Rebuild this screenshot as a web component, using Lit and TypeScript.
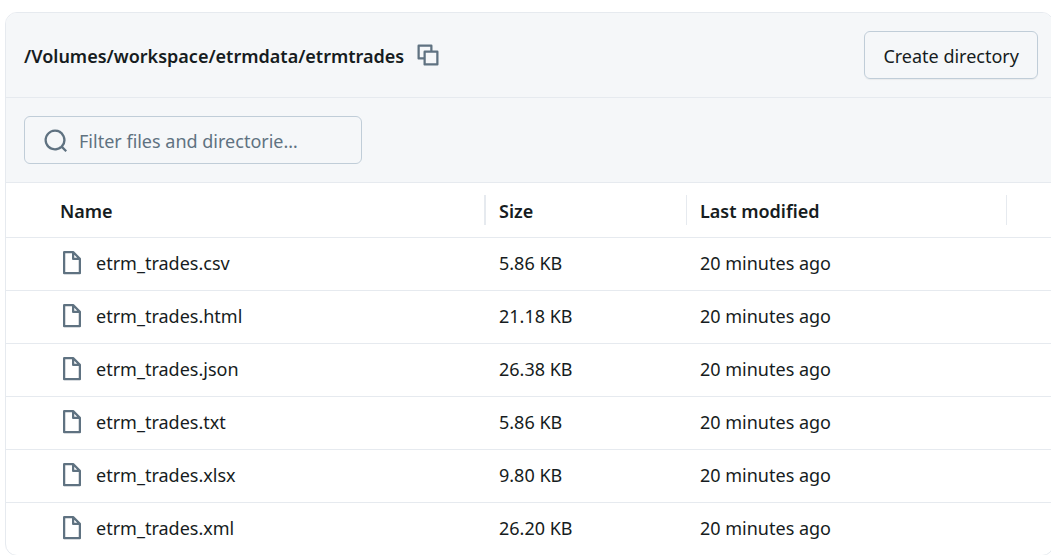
import { LitElement, html, css, svg } from "lit";
import { customElement, property, state } from "lit/decorators.js";

interface FileEntry {
  name: string;
  size: string;
  modified: string;
}

const icons = {
  copy: svg`<path fill-rule="evenodd" clip-rule="evenodd" d="M1.75 1a.75.75 0 0 0-.75.75v8.5c0 .414.336.75.75.75H5v3.25c0 .414.336.75.75.75h8.5a.75.75 0 0 0 .75-.75v-8.5a.75.75 0 0 0-.75-.75H11V1.75a.75.75 0 0 0-.75-.75zM9.5 5V2.5h-7v7H5V5.75A.75.75 0 0 1 5.75 5zm-3 8.5v-7h7v7z"/>`,
  search: svg`<path fill-rule="evenodd" clip-rule="evenodd" d="M8 1a7 7 0 1 0 4.39 12.453l2.55 2.55 1.06-1.06-2.55-2.55A7 7 0 0 0 8 1M2.5 8a5.5 5.5 0 1 1 11 0 5.5 5.5 0 0 1-11 0"/>`,
  file: svg`<path fill-rule="evenodd" clip-rule="evenodd" d="M2 .75A.75.75 0 0 1 2.75 0h6a.75.75 0 0 1 .53.22l4.5 4.5c.141.14.22.331.22.53v9.5a.75.75 0 0 1-.75.75H2.75a.75.75 0 0 1-.75-.75zm1.5.75V14h9V6H8.75A.75.75 0 0 1 8 5.25V1.5zm6 1.06v1.94h1.94z"/>`,
};

@customElement("ui-icon")
export class UiIcon extends LitElement {
  @property() name: keyof typeof icons = "file";

  static styles = css`
    :host {
      display: inline-flex;
      flex: none;
      color: #5f7281;
    }
    .glyph {
      width: 24px;
      height: 24px;
      fill: currentColor;
    }
  `;

  render() {
    return html`<svg class="glyph" viewBox="0 0 16 16" aria-hidden="true">${icons[this.name]}</svg>`;
  }
}

@customElement("app-root")
export class AppRoot extends LitElement {
  @state() private query = "";

  private files: FileEntry[] = [
    { name: "etrm_trades.csv", size: "5.86 KB", modified: "20 minutes ago" },
    { name: "etrm_trades.html", size: "21.18 KB", modified: "20 minutes ago" },
    { name: "etrm_trades.json", size: "26.38 KB", modified: "20 minutes ago" },
    { name: "etrm_trades.txt", size: "5.86 KB", modified: "20 minutes ago" },
    { name: "etrm_trades.xlsx", size: "9.80 KB", modified: "20 minutes ago" },
    { name: "etrm_trades.xml", size: "26.20 KB", modified: "20 minutes ago" },
  ];

  static styles = css`
    :host {
      display: block;
      overflow: hidden;
      padding: 12px 0 0 5px;
      background: #fff;
      color: #161c21;
      font-family: "Segoe UI", "Noto Sans", "Open Sans", sans-serif;
      font-size: 18px;
      line-height: 26px;
    }
    * {
      box-sizing: border-box;
    }
    .panel {
      margin-right: -3px;
      border: 1px solid #e6eaef;
      border-radius: 12px;
      overflow: hidden;
    }
    .head,
    .toolbar {
      display: flex;
      align-items: center;
      padding: 18px;
      background: #f5f7f9;
      border-bottom: 1px solid #e6eaef;
    }
    .head {
      justify-content: space-between;
      padding-right: 15px;
    }
    .path {
      display: flex;
      align-items: center;
      gap: 12px;
    }
    .title {
      margin: 0;
      padding-top: 2px;
      font-size: 18px;
      font-weight: 600;
    }
    .copy {
      display: flex;
      padding: 0;
      border: 0;
      background: none;
      cursor: pointer;
    }
    .create {
      height: 48px;
      padding: 2px 18px 0;
      border: 1px solid #c0cdd8;
      border-radius: 6px;
      background: transparent;
      box-shadow: 0 1px 1px rgba(0, 0, 0, 0.05);
      color: inherit;
      font: inherit;
      cursor: pointer;
    }
    .search {
      display: flex;
      align-items: center;
      gap: 12px;
      width: 338px;
      height: 48px;
      padding: 0 18px;
      border: 1px solid #c0cdd8;
      border-radius: 6px;
    }
    .input {
      flex: 1;
      min-width: 0;
      padding: 2px 0 0;
      border: 0;
      outline: 0;
      background: none;
      color: inherit;
      font: inherit;
    }
    .input::placeholder {
      color: #5f7281;
      opacity: 1;
    }
    .files {
      width: 100%;
      border-collapse: separate;
      border-spacing: 0;
      table-layout: fixed;
    }
    .col-name {
      width: 480px;
    }
    .col-size {
      width: 201px;
    }
    .col-modified {
      width: 320px;
    }
    .th {
      padding: 12px 0;
      border-bottom: 1px solid #e6eaef;
      font-weight: 600;
      text-align: left;
    }
    .label {
      display: block;
      padding: 3px 0 1px 13px;
      border-right: 1px solid #e6eaef;
    }
    .td {
      height: 53px;
      padding: 0 13px 2px;
      border-bottom: 1px solid #e6eaef;
    }
    .row:last-child .td {
      height: 52px;
      border-bottom: 0;
    }
    .label.first {
      border-right-width: 2px;
    }
    .first {
      padding-left: 54px;
    }
    .file {
      display: flex;
      align-items: center;
      gap: 12px;
      color: inherit;
      text-decoration: none;
    }
  `;

  render() {
    const shown = this.files.filter((f) => f.name.includes(this.query));
    return html`
      <section class="panel">
        <header class="head">
          <div class="path">
            <h1 class="title">/Volumes/workspace/etrmdata/etrmtrades</h1>
            <button class="copy" type="button" aria-label="Copy path"><ui-icon name="copy"></ui-icon></button>
          </div>
          <button class="create" type="button">Create directory</button>
        </header>
        <div class="toolbar">
          <label class="search">
            <ui-icon name="search"></ui-icon>
            <input
              class="input"
              type="text"
              aria-label="Filter files and directories"
              placeholder="Filter files and directorie…"
              .value=${this.query}
              @input=${(e: Event) => (this.query = (e.target as HTMLInputElement).value)}
            />
          </label>
        </div>
        <table class="files">
          <colgroup>
            <col class="col-name" />
            <col class="col-size" />
            <col class="col-modified" />
            <col />
          </colgroup>
          <thead>
            <tr>
              <th class="th" scope="col"><span class="label first">Name</span></th>
              <th class="th" scope="col"><span class="label">Size</span></th>
              <th class="th" scope="col"><span class="label">Last modified</span></th>
              <td class="th"></td>
            </tr>
          </thead>
          <tbody>
            ${shown.map(
              (f) => html`
                <tr class="row">
                  <td class="td first">
                    <a class="file" href="#"><ui-icon name="file"></ui-icon>${f.name}</a>
                  </td>
                  <td class="td">${f.size}</td>
                  <td class="td">${f.modified}</td>
                  <td class="td"></td>
                </tr>
              `
            )}
          </tbody>
        </table>
      </section>
    `;
  }
}
